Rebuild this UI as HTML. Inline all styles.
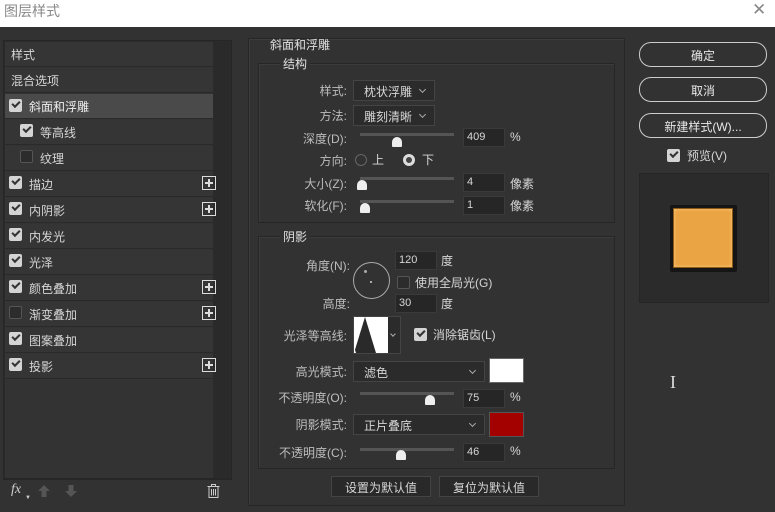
<!DOCTYPE html>
<html><head><meta charset="utf-8"><style>
*{margin:0;padding:0;box-sizing:border-box}
body{width:775px;height:512px;background:#323232;font-family:"Liberation Sans","Noto Sans CJK SC",sans-serif;font-size:12px;color:#d6d6d6;position:relative;overflow:hidden}
.a{position:absolute;white-space:nowrap}
.title{left:0;top:0;width:775px;height:27px;background:#fff}
.row{position:absolute;left:5px;width:208px;height:25px;background:#353535;border-bottom:1px solid #2a2a2a}
.row span{position:absolute;top:4px}
.cb{position:absolute;width:13px;height:13px;background:#d4d4d4;border-radius:2px}
.cb::after{content:"";position:absolute;left:3px;top:2px;width:6px;height:3px;border-left:2px solid #333;border-bottom:2px solid #333;transform:rotate(-45deg)}
.cbo{position:absolute;width:13px;height:13px;border:1px solid #555;background:#2c2c2c;border-radius:2px}
.plus{position:absolute;left:197px;width:14px;height:14px;border:1px solid #ddd}
.plus::before{content:"";position:absolute;left:2px;top:5px;width:8px;height:2px;background:#ddd}
.plus::after{content:"";position:absolute;left:5px;top:2px;width:2px;height:8px;background:#ddd}
.box{position:absolute;border:1px solid #262626;box-shadow:inset 1px 1px 0 #3c3c3c}
.sel{position:absolute;background:#2b2b2b;border:1px solid #444;height:21px;padding:2px 0 0 10px}
.sel::after{content:"";position:absolute;right:9px;top:6px;width:4px;height:4px;border-right:1px solid #aaa;border-bottom:1px solid #aaa;transform:rotate(45deg)}
.in{position:absolute;background:#262626;border:1px solid #3a3a3a;width:42px;height:19px;padding:2px 0 0 3px;font-size:11px}
.tr{position:absolute;height:3px;background:#555;width:94px;left:360px}
.th{position:absolute;width:10px;height:10px;background:#eee;border-radius:50% 50% 1px 1px}
.lbl{position:absolute;text-align:right;width:90px;left:257px;color:#bdbdbd}
.btn{position:absolute;left:639px;width:128px;height:25px;border:1px solid #ccc;border-radius:12px;text-align:center;padding-top:4px;color:#e8e8e8}
.b2{position:absolute;height:21px;background:#292929;border:1px solid #444;text-align:center;padding-top:2px}
</style></head><body>
<div class="a title"></div>
<div class="a" style="left:4px;top:1px;font-size:14px;color:#888">图层样式</div>
<div class="a" style="left:752px;top:0px;font-size:17px;color:#888;font-weight:300">✕</div>

<div class="a" style="left:3px;top:40px;width:229px;height:439px;background:#2b2b2b;border:1px solid #262626"></div>
<div class="a" style="left:214px;top:42px;width:15px;height:435px;background:#2a2a2a"></div>
<div class="a" style="left:5px;top:42px;width:208px;height:436px;background:#333"></div>
<div class="row" style="top:42px"><span style="left:6px">样式</span></div>
<div class="row" style="top:68px"><span style="left:6px">混合选项</span></div>
<div class="row" style="top:94px;background:#4a4a4a"><div class="cb" style="left:4px;top:5px"></div><span style="left:24px;color:#eee">斜面和浮雕</span></div>
<div class="row" style="top:120px"><div class="cb" style="left:15px;top:4px"></div><span style="left:35px">等高线</span></div>
<div class="row" style="top:146px"><div class="cbo" style="left:15px;top:4px"></div><span style="left:35px">纹理</span></div>
<div class="row" style="top:172px"><div class="cb" style="left:4px;top:4px"></div><span style="left:24px">描边</span><div class="plus" style="top:4px"></div></div>
<div class="row" style="top:198px"><div class="cb" style="left:4px;top:4px"></div><span style="left:24px">内阴影</span><div class="plus" style="top:4px"></div></div>
<div class="row" style="top:224px"><div class="cb" style="left:4px;top:4px"></div><span style="left:24px">内发光</span></div>
<div class="row" style="top:250px"><div class="cb" style="left:4px;top:4px"></div><span style="left:24px">光泽</span></div>
<div class="row" style="top:276px"><div class="cb" style="left:4px;top:4px"></div><span style="left:24px">颜色叠加</span><div class="plus" style="top:4px"></div></div>
<div class="row" style="top:302px"><div class="cbo" style="left:4px;top:4px"></div><span style="left:24px">渐变叠加</span><div class="plus" style="top:4px"></div></div>
<div class="row" style="top:328px"><div class="cb" style="left:4px;top:4px"></div><span style="left:24px">图案叠加</span></div>
<div class="row" style="top:354px"><div class="cb" style="left:4px;top:4px"></div><span style="left:24px">投影</span><div class="plus" style="top:4px"></div></div>
<div class="a" style="left:3px;top:479px;width:229px;height:1px;background:#262626"></div>
<div class="a" style="left:11px;top:482px;font-style:italic;font-family:'Liberation Serif',serif;font-size:14px;color:#ccc">fx</div>
<div class="a" style="left:25px;top:495px;font-size:6px;color:#ccc">▼</div>
<svg class="a" style="left:38px;top:485px" width="12" height="12"><path d="M6 0L12 6H8.5V12H3.5V6H0Z" fill="#555"/></svg>
<svg class="a" style="left:65px;top:485px" width="12" height="12"><path d="M6 12L12 6H8.5V0H3.5V6H0Z" fill="#555"/></svg>
<svg class="a" style="left:207px;top:484px" width="13" height="14"><path d="M0.5 2.5H12.5M4.5 2.5V0.5H8.5V2.5M2 2.5V13.5H11V2.5M4.5 5V11.5M6.5 5V11.5M8.5 5V11.5" stroke="#ccc" fill="none"/></svg>

<div class="box" style="left:248px;top:38px;width:377px;height:468px"></div>
<div class="a" style="left:270px;top:36px;color:#e0e0e0">斜面和浮雕</div>
<div class="box" style="left:258px;top:63px;width:357px;height:160px"></div>
<div class="a" style="left:280px;top:55px;background:#323232;padding:0 3px;color:#e0e0e0">结构</div>
<div class="lbl" style="top:82px">样式:</div><div class="sel" style="left:353px;top:80px;width:82px">枕状浮雕</div>
<div class="lbl" style="top:107px">方法:</div><div class="sel" style="left:353px;top:105px;width:82px">雕刻清晰</div>
<div class="lbl" style="top:130px">深度(D):</div><div class="tr" style="top:133px"></div><div class="th" style="left:392px;top:137px"></div><div class="in" style="left:463px;top:128px">409</div><div class="a" style="left:510px;top:130px">%</div>
<div class="lbl" style="top:152px">方向:</div>
<div class="a" style="left:355px;top:154px;width:12px;height:12px;border:1px solid #666;border-radius:50%"></div><div class="a" style="left:372px;top:151px">上</div>
<div class="a" style="left:403px;top:154px;width:12px;height:12px;border:3px solid #ddd;border-radius:50%;background:#444"></div><div class="a" style="left:422px;top:151px">下</div>
<div class="lbl" style="top:175px">大小(Z):</div><div class="tr" style="top:177px"></div><div class="th" style="left:357px;top:180px"></div><div class="in" style="left:463px;top:173px">4</div><div class="a" style="left:510px;top:175px">像素</div>
<div class="lbl" style="top:197px">软化(F):</div><div class="tr" style="top:200px"></div><div class="th" style="left:360px;top:203px"></div><div class="in" style="left:463px;top:196px">1</div><div class="a" style="left:510px;top:197px">像素</div>

<div class="box" style="left:258px;top:236px;width:357px;height:233px"></div>
<div class="a" style="left:280px;top:228px;background:#323232;padding:0 3px;color:#e0e0e0">阴影</div>
<div class="lbl" style="top:257px;width:93px">角度(N):</div>
<div class="a" style="left:353px;top:262px;width:37px;height:37px;border:1px solid #aaa;border-radius:50%"></div>
<div class="a" style="left:364px;top:270px;width:3px;height:3px;background:#aaa;border-radius:50%"></div>
<div class="a" style="left:370px;top:281px;width:2px;height:2px;background:#aaa"></div>
<div class="in" style="left:395px;top:251px">120</div><div class="a" style="left:441px;top:252px">度</div>
<div class="cbo" style="left:397px;top:276px"></div><div class="a" style="left:415px;top:274px">使用全局光(G)</div>
<div class="lbl" style="top:295px;width:93px">高度:</div>
<div class="in" style="left:395px;top:294px">30</div><div class="a" style="left:441px;top:295px">度</div>
<div class="lbl" style="top:327px">光泽等高线:</div>
<div class="a" style="left:353px;top:316px;width:48px;height:38px;border:1px solid #444;background:#2b2b2b"></div>
<svg class="a" style="left:354px;top:317px" width="34" height="36"><rect width="34" height="36" fill="#fff"/><polygon points="0,36 11,0 22,36" fill="#2a2a2a"/><polygon points="0,36 0,30 2,36" fill="#fff"/></svg>
<div class="a" style="left:391px;top:332px;width:4px;height:4px;border-right:1px solid #aaa;border-bottom:1px solid #aaa;transform:rotate(45deg)"></div>
<div class="cb" style="left:414px;top:328px"></div><div class="a" style="left:433px;top:326px">消除锯齿(L)</div>
<div class="lbl" style="top:363px">高光模式:</div><div class="sel" style="left:353px;top:361px;width:132px">滤色</div>
<div class="a" style="left:489px;top:358px;width:35px;height:25px;background:#fff;border:1px solid #666"></div>
<div class="lbl" style="top:389px">不透明度(O):</div><div class="tr" style="top:392px"></div><div class="th" style="left:425px;top:395px"></div><div class="in" style="left:463px;top:389px">75</div><div class="a" style="left:510px;top:390px">%</div>
<div class="lbl" style="top:416px">阴影模式:</div><div class="sel" style="left:353px;top:414px;width:132px">正片叠底</div>
<div class="a" style="left:489px;top:412px;width:35px;height:25px;background:#a30000;border:1px solid #555"></div>
<div class="lbl" style="top:444px">不透明度(C):</div><div class="tr" style="top:448px"></div><div class="th" style="left:396px;top:450px"></div><div class="in" style="left:463px;top:443px">46</div><div class="a" style="left:510px;top:444px">%</div>

<div class="b2" style="left:331px;top:476px;width:100px">设置为默认值</div>
<div class="b2" style="left:439px;top:476px;width:100px">复位为默认值</div>

<div class="btn" style="top:42px">确定</div>
<div class="btn" style="top:77px">取消</div>
<div class="btn" style="top:113px">新建样式(W)...</div>
<div class="cb" style="left:667px;top:149px"></div><div class="a" style="left:687px;top:147px">预览(V)</div>
<div class="a" style="left:639px;top:173px;width:130px;height:130px;background:#2b2b2b;border:1px solid #262626"></div>
<div class="a" style="left:670px;top:205px;width:67px;height:67px;background:#151515;border-radius:2px"></div>
<div class="a" style="left:673px;top:208px;width:60px;height:60px;background:#eba443;border:1px solid #8a5a18;box-shadow:inset 0 0 3px #f8cd85"></div>
<div class="a" style="left:670px;top:372px;font-size:18px;color:#ddd;font-family:'Liberation Serif',serif">I</div>
</body></html>
